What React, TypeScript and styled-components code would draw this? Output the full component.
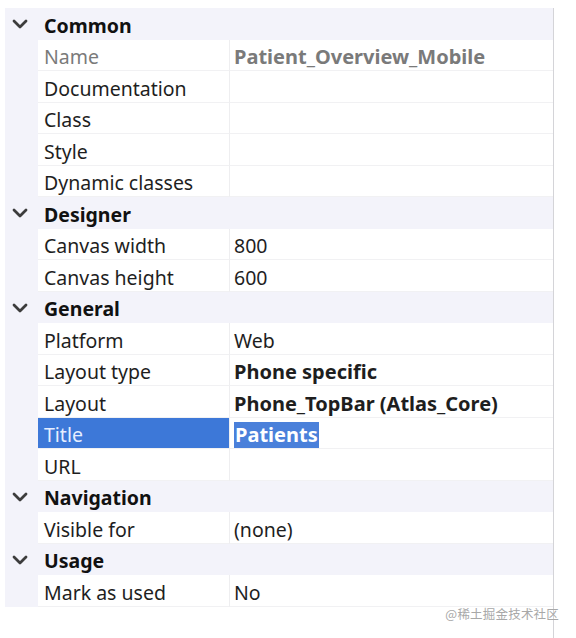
import React from "react";
import styled, { createGlobalStyle } from "styled-components";

const Global = createGlobalStyle`
  html, body { margin: 0; padding: 0; background: #ffffff; }
  body { font-family: "Noto Sans", "Open Sans", sans-serif; }
`;

const Page = styled.div`
  position: relative;
  height: 638px;
  padding-top: 8px;
  box-sizing: border-box;
`;

const Panel = styled.div`
  margin-left: 5px;
  width: 549px;
  height: 630px;
  border-right: 1px solid #d4d4d8;
  box-sizing: border-box;
`;

const Grid = styled.div`
  display: grid;
  grid-template-columns: 33px 192px 1fr;
  grid-auto-rows: 31.5px;
  background: #f3f3fa;
`;

const HeaderRow = styled.div`
  grid-column: 1 / -1;
  display: flex;
  align-items: center;
  padding-top: 3px;
  box-sizing: border-box;
  font-size: 19.5px;
  font-weight: 700;
  color: #111;
`;

const Chevron = styled.span`
  width: 33px;
  display: flex;
  justify-content: flex-start;
  align-items: center;
  padding-left: 7px;
  box-sizing: border-box;
  margin-top: -2px;
`;

const HeaderText = styled.span`
  padding-left: 6px;
`;

const Cell = styled.div<{ $selected?: boolean; $muted?: boolean }>`
  display: flex;
  align-items: center;
  padding-top: 4px;
  font-size: 19.5px;
  white-space: nowrap;
  overflow: hidden;
  background: ${(p) => (p.$selected ? "#3d78d8" : "#ffffff")};
  color: ${(p) => (p.$selected ? "#e6eeff" : p.$muted ? "#7a7a7a" : "#1e1e1e")};
  border-bottom: 1px solid #f1f1f3;
  box-sizing: border-box;
`;

const LabelCell = styled(Cell)`
  grid-column: 2;
  padding-left: 6px;
  border-right: 1px solid #eeeef0;
`;

const ValueCell = styled(Cell)<{ $bold?: boolean }>`
  grid-column: 3;
  padding-left: 4px;
  font-weight: ${(p) => (p.$bold ? 700 : 400)};
  font-size: ${(p) => (p.$bold ? "20px" : "19.5px")};
`;

const Selection = styled.span`
  background: #4a80da;
  color: #ffffff;
  padding: 0 1px;
  line-height: 26px;
`;

const Watermark = styled.div`
  position: absolute;
  right: 17px;
  top: 604px;
  font-size: 12.5px;
  color: #a8a8a8;
  font-family: "Noto Sans CJK SC", sans-serif;
  letter-spacing: 0.2px;
`;

type Prop = {
  label: string;
  value?: string;
  bold?: boolean;
  muted?: boolean;
  selected?: boolean;
};

type Section = { title: string; props: Prop[] };

const sections: Section[] = [
  {
    title: "Common",
    props: [
      { label: "Name", value: "Patient_Overview_Mobile", bold: true, muted: true },
      { label: "Documentation" },
      { label: "Class" },
      { label: "Style" },
      { label: "Dynamic classes" },
    ],
  },
  {
    title: "Designer",
    props: [
      { label: "Canvas width", value: "800" },
      { label: "Canvas height", value: "600" },
    ],
  },
  {
    title: "General",
    props: [
      { label: "Platform", value: "Web" },
      { label: "Layout type", value: "Phone specific", bold: true },
      { label: "Layout", value: "Phone_TopBar (Atlas_Core)", bold: true },
      { label: "Title", value: "Patients", bold: true, selected: true },
      { label: "URL" },
    ],
  },
  {
    title: "Navigation",
    props: [{ label: "Visible for", value: "(none)" }],
  },
  {
    title: "Usage",
    props: [{ label: "Mark as used", value: "No" }],
  },
];

const ChevronIcon = () => (
  <svg width="16" height="10" viewBox="0 0 16 10">
    <polyline
      points="2,2 8,8 14,2"
      fill="none"
      stroke="#3c3c3c"
      strokeWidth="2.8"
      strokeLinecap="round"
      strokeLinejoin="round"
    />
  </svg>
);

export default function App() {
  return (
    <Page>
      <Global />
      <Panel>
        <Grid>
          {sections.map((s) => (
            <React.Fragment key={s.title}>
              <HeaderRow>
                <Chevron>
                  <ChevronIcon />
                </Chevron>
                <HeaderText>{s.title}</HeaderText>
              </HeaderRow>
              {s.props.map((p) => (
                <React.Fragment key={p.label}>
                  <LabelCell $selected={p.selected} $muted={p.muted}>
                    {p.label}
                  </LabelCell>
                  <ValueCell $bold={p.bold} $muted={p.muted}>
                    {p.selected ? <Selection>{p.value}</Selection> : p.value}
                  </ValueCell>
                </React.Fragment>
              ))}
            </React.Fragment>
          ))}
        </Grid>
      </Panel>
      <Watermark>@稀土掘金技术社区</Watermark>
    </Page>
  );
}
